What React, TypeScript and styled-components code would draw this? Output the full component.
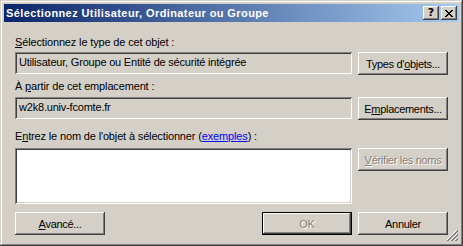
import styled, { createGlobalStyle } from "styled-components";

const Global = createGlobalStyle`
  html, body {
    margin: 0;
    padding: 0;
    background: #d4d0c8;
  }
  body {
    font-family: "Liberation Sans", Arial, sans-serif;
    font-size: 11px;
    letter-spacing: -0.15px;
  }
`;

const Window = styled.div`
  position: relative;
  width: 463px;
  height: 246px;
  box-sizing: border-box;
  padding: 4px;
  background: #d4d0c8;
  box-shadow: inset -1px -1px #404040, inset 1px 1px #d4d0c8,
    inset -2px -2px #808080, inset 2px 2px #ffffff;
  display: flex;
  flex-direction: column;
`;

const TitleBar = styled.div`
  height: 18px;
  display: flex;
  align-items: center;
  padding: 0 2px;
  background: linear-gradient(to right, #0a246a, #a6caf0);
  color: #fff;
  font-weight: bold;
  font-size: 11px;
`;

const Title = styled.span`
  flex: 1;
  white-space: nowrap;
  letter-spacing: 0.4px;
`;

const CaptionButton = styled.div<{ $gap?: boolean }>`
  width: 16px;
  height: 14px;
  margin-left: ${(p) => (p.$gap ? "2px" : "0")};
  background: #d4d0c8;
  box-shadow: inset -1px -1px #404040, inset 1px 1px #ffffff,
    inset -2px -2px #808080, inset 2px 2px #d4d0c8;
  display: flex;
  align-items: center;
  justify-content: center;
  color: #000;
  font-family: "DejaVu Sans", sans-serif;
  font-weight: bold;
  font-size: 11px;
  line-height: 14px;
  letter-spacing: 0;
`;

const Client = styled.div`
  display: grid;
  grid-template-columns: 337px 90px;
  grid-template-rows: 16px 28px 17px 33px 18px 64px 23px;
  column-gap: 6px;
  padding: 14px 0 0 11px;
`;

const Label = styled.div`
  grid-column: 1 / span 2;
  line-height: 13px;
  color: #000;
  white-space: nowrap;
`;

const Field = styled.div<{ $white?: boolean }>`
  height: ${(p) => (p.$white ? "56px" : "22px")};
  box-sizing: border-box;
  padding: 4px 4px;
  line-height: 13px;
  color: #000;
  white-space: nowrap;
  overflow: hidden;
  letter-spacing: -0.2px;
  background: ${(p) => (p.$white ? "#ffffff" : "#d4d0c8")};
  box-shadow: inset 1px 1px #808080, inset -1px -1px #ffffff,
    inset 2px 2px #404040, inset -2px -2px #d4d0c8;
`;

const Button = styled.div<{ $disabled?: boolean; $default?: boolean }>`
  width: 90px;
  height: 23px;
  box-sizing: border-box;
  display: flex;
  align-items: center;
  justify-content: center;
  white-space: nowrap;
  letter-spacing: -0.3px;
  background: #d4d0c8;
  color: ${(p) => (p.$disabled ? "#808080" : "#000")};
  text-shadow: ${(p) => (p.$disabled ? "1px 1px #ffffff" : "none")};
  border: ${(p) => (p.$default ? "1px solid #000" : "none")};
  box-shadow: inset -1px -1px #404040, inset 1px 1px #ffffff,
    inset -2px -2px #808080, inset 2px 2px #d4d0c8;
`;

const BottomLeft = styled.div`
  display: flex;
  justify-content: space-between;
`;

const Link = styled.span`
  color: #0000ff;
  text-decoration: underline;
`;

const Grip = styled.svg`
  position: absolute;
  right: 4px;
  bottom: 4px;
`;

function CloseGlyph() {
  return (
    <svg width="8" height="7" viewBox="0 0 8 7" shapeRendering="crispEdges">
      <path d="M0 0h2v1h-2zM6 0h2v1h-2zM1 1h2v1h-2zM5 1h2v1h-2zM2 2h4v1h-4zM3 3h2v1h-2zM2 4h4v1h-4zM1 5h2v1h-2zM5 5h2v1h-2zM0 6h2v1h-2zM6 6h2v1h-2z" fill="#000" />
    </svg>
  );
}

export default function App() {
  return (
    <>
      <Global />
      <Window>
        <TitleBar>
          <Title>Sélectionnez Utilisateur, Ordinateur ou Groupe</Title>
          <CaptionButton>?</CaptionButton>
          <CaptionButton $gap>
            <CloseGlyph />
          </CaptionButton>
        </TitleBar>
        <Client>
          <Label>
            <u>S</u>électionnez le type de cet objet :
          </Label>
          <Field>Utilisateur, Groupe ou Entité de sécurité intégrée</Field>
          <Button>
            Types d'<u>o</u>bjets...
          </Button>
          <Label>
            À <u>p</u>artir de cet emplacement :
          </Label>
          <Field>w2k8.univ-fcomte.fr</Field>
          <Button>
            E<u>m</u>placements...
          </Button>
          <Label>
            E<u>n</u>trez le nom de l'objet à sélectionner (<Link>exemples</Link>) :
          </Label>
          <Field $white />
          <Button $disabled>
            <u>V</u>érifier les noms
          </Button>
          <BottomLeft>
            <Button>
              <u>A</u>vancé...
            </Button>
            <Button $disabled $default>
              OK
            </Button>
          </BottomLeft>
          <Button>Annuler</Button>
        </Client>
        <Grip width="12" height="12" viewBox="0 0 12 12" shapeRendering="crispEdges">
          <path d="M11 0L0 11M11 4L4 11M11 8L8 11" stroke="#808080" strokeWidth="1" />
          <path d="M11 1L1 11M11 5L5 11M11 9L9 11" stroke="#808080" strokeWidth="1" />
          <path d="M10 0L-1 11M10 4L3 11M10 8L7 11" stroke="#ffffff" strokeWidth="1" />
        </Grip>
      </Window>
    </>
  );
}
